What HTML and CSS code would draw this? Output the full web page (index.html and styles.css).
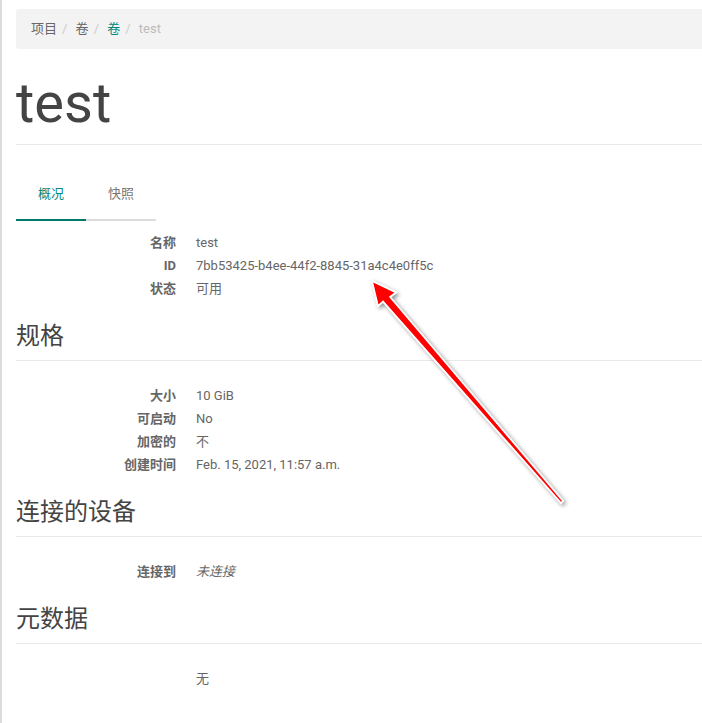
FILE: index.html
```html
<!DOCTYPE html>
<html lang="zh-CN">
<head>
<meta charset="utf-8">
<title>test</title>
<link rel="stylesheet" href="styles.css">
</head>
<body>
<div class="page">
  <ol class="breadcrumb">
    <li class="crumb">项目</li>
    <li class="crumb">卷</li>
    <li class="crumb"><a href="#" class="crumb-link">卷</a></li>
    <li class="crumb crumb-active">test</li>
  </ol>

  <div class="page-header">
    <h1 class="title">test</h1>
  </div>

  <ul class="tabs">
    <li class="tab tab-active">概况</li>
    <li class="tab">快照</li>
  </ul>

  <div class="detail">
    <dl class="props props-first">
      <dt>名称</dt><dd>test</dd>
      <dt>ID</dt><dd>7bb53425-b4ee-44f2-8845-31a4c4e0ff5c</dd>
      <dt>状态</dt><dd>可用</dd>
    </dl>

    <h4 class="section">规格</h4>
    <dl class="props">
      <dt>大小</dt><dd>10 GiB</dd>
      <dt>可启动</dt><dd>No</dd>
      <dt>加密的</dt><dd>不</dd>
      <dt>创建时间</dt><dd>Feb. 15, 2021, 11:57 a.m.</dd>
    </dl>

    <h4 class="section">连接的设备</h4>
    <dl class="props">
      <dt>连接到</dt><dd><em>未连接</em></dd>
    </dl>

    <h4 class="section">元数据</h4>
    <dl class="props">
      <dt></dt><dd>无</dd>
    </dl>
  </div>
</div>

<svg class="arrow" width="702" height="723" viewBox="0 0 702 723" xmlns="http://www.w3.org/2000/svg">
  <defs>
    <filter id="shadow" x="-20%" y="-20%" width="140%" height="140%">
      <feDropShadow dx="2" dy="2" stdDeviation="2" flood-color="#000" flood-opacity="0.45"/>
    </filter>
  </defs>
  <polygon points="372,281 396,292.5 390,297 563,501 561,503 383,301.5 378,306"
           fill="#ff0000" stroke="#ffffff" stroke-width="1.6" stroke-linejoin="miter" filter="url(#shadow)"/>
</svg>
</body>
</html>
```

FILE: styles.css
```css
html, body {
  margin: 0;
  padding: 0;
  background: #fff;
}

body {
  position: relative;
  width: 702px;
  height: 723px;
  overflow: hidden;
  font-family: Roboto, "Noto Sans CJK SC", sans-serif;
  font-size: 13px;
  line-height: 24px;
  color: #666;
}

.page {
  border-left: 2px solid #dcdcdc;
  padding: 9px 0 0 14px;
  min-height: 714px;
}

/* breadcrumb */
.breadcrumb {
  list-style: none;
  margin: 0;
  padding: 8px 15px;
  display: flex;
  background: #f3f3f3;
  border-radius: 3px 0 0 3px;
}

.crumb {
  color: #666;
}

.crumb + .crumb::before {
  content: "/\00a0";
  padding: 0 5px;
  color: #ccc;
}

.crumb-link {
  color: #00897b;
  text-decoration: none;
}

.crumb-active {
  color: #bbb;
}

/* header */
.page-header {
  margin-top: 23px;
  padding-bottom: 10px;
  border-bottom: 1px solid #eaeaea;
}

.title {
  margin: 0;
  font-size: 56px;
  line-height: 62px;
  font-weight: 400;
  color: #444;
}

/* tabs */
.tabs {
  list-style: none;
  margin: 25px 0 0;
  padding: 0;
  display: flex;
  width: 140px;
  box-shadow: inset 0 -2px 0 #dddddd;
}

.tab {
  width: 70px;
  box-sizing: border-box;
  text-align: center;
  padding: 12px 0 13px;
  border-bottom: 2px solid transparent;
  color: #777;
}

.tab-active {
  color: #00897b;
  border-bottom-color: #00796b;
}

/* details */
.props {
  display: grid;
  grid-template-columns: 160px 1fr;
  column-gap: 20px;
  margin: 23px 0 0;
  line-height: 23px;
}

.props-first {
  margin-top: 10px;
}

.props dt {
  text-align: right;
  font-weight: 700;
  color: #666;
}

.props dd {
  margin: 0;
  color: #666;
}

.props em {
  font-style: italic;
}

.section {
  margin: 23px 0 0;
  padding-bottom: 11px;
  border-bottom: 1px solid #eaeaea;
  font-size: 24px;
  line-height: 26px;
  font-weight: 400;
  color: #444;
}

/* annotation arrow overlay */
.arrow {
  position: absolute;
  top: 0;
  left: 0;
  pointer-events: none;
}
```
